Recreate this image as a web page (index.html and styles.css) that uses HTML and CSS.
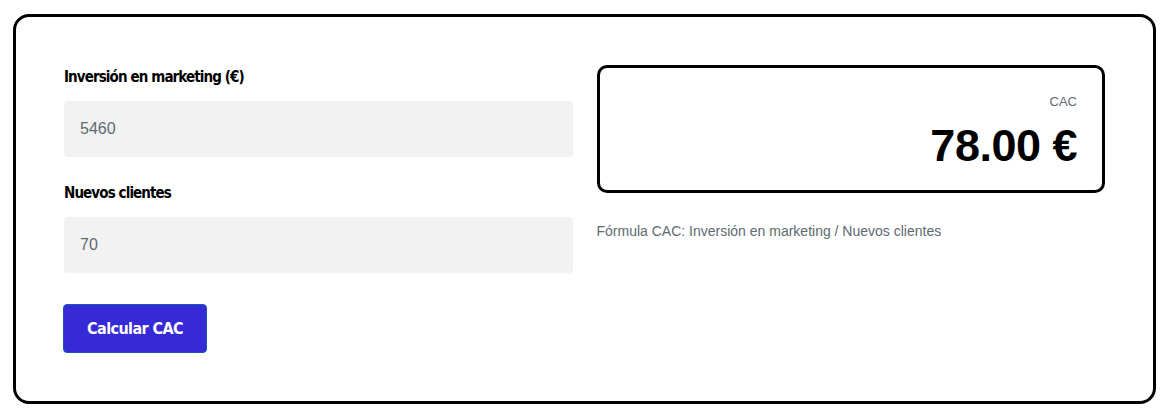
FILE: index.html
```html
<!DOCTYPE html>
<html lang="es">
<head>
<meta charset="utf-8">
<title>Calculadora CAC</title>
<link rel="stylesheet" href="styles.css">
</head>
<body>
<div class="card">
  <div class="form">
    <label class="label" for="inv">Inversión en marketing (€)</label>
    <input class="input" id="inv" type="text" value="5460">
    <label class="label label-2" for="cli">Nuevos clientes</label>
    <input class="input" id="cli" type="text" value="70">
    <button class="btn" type="button">Calcular CAC</button>
  </div>
  <div class="result-col">
    <div class="result">
      <div class="result-label">CAC</div>
      <div class="result-value">78.00 €</div>
    </div>
    <p class="formula">Fórmula CAC: Inversión en marketing / Nuevos clientes</p>
  </div>
</div>
</body>
</html>
```
FILE: styles.css
```css
* { box-sizing: border-box; }
html, body { background: #fff; }
body {
  margin: 14px 13px 0 13px;
  font-family: "Liberation Sans", Arial, sans-serif;
  color: #000;
}
.card {
  border: 3px solid #000;
  border-radius: 16px;
  padding: 48px;
  height: 390px;
  display: grid;
  grid-template-columns: 1fr 1fr;
  column-gap: 24px;
  align-items: start;
}
.form {
  display: flex;
  flex-direction: column;
  align-items: flex-start;
}
.label {
  font-family: "DejaVu Sans Condensed", "Liberation Sans", sans-serif;
  font-weight: 700;
  font-size: 15px;
  line-height: 20px;
  letter-spacing: -0.9px;
  margin-top: 2px;
  margin-bottom: 14px;
}
.label-2 { margin-top: 26px; }
.input {
  width: 100%;
  height: 56px;
  border: none;
  border-radius: 4px;
  background: #f2f2f2;
  padding: 0 16px;
  font-family: "Liberation Sans", Arial, sans-serif;
  font-size: 16px;
  color: #5c6a72;
  outline: none;
}
.btn {
  margin-top: 31px;
  margin-left: -1px;
  width: 144px;
  height: 49px;
  background: #3629d6;
  border: 1px solid #1c55c0;
  border-radius: 4px;
  color: #fff;
  font-family: "DejaVu Sans Condensed", "Liberation Sans", sans-serif;
  font-weight: 700;
  font-size: 16px;
  letter-spacing: -0.6px;
  cursor: pointer;
}
.result-col {
  display: flex;
  flex-direction: column;
}
.result {
  border: 3px solid #000;
  border-radius: 10px;
  height: 128px;
  padding: 24px 25px 0 24px;
  text-align: right;
}
.result-label {
  font-size: 13px;
  line-height: 20px;
  color: #5c6a72;
}
.result-value {
  font-size: 45px;
  font-weight: 700;
  line-height: 52px;
  letter-spacing: -0.5px;
  margin-top: 8px;
}
.formula {
  margin: 28px 0 0 0;
  font-size: 14px;
  line-height: 20px;
  color: #5c6a72;
}
```
